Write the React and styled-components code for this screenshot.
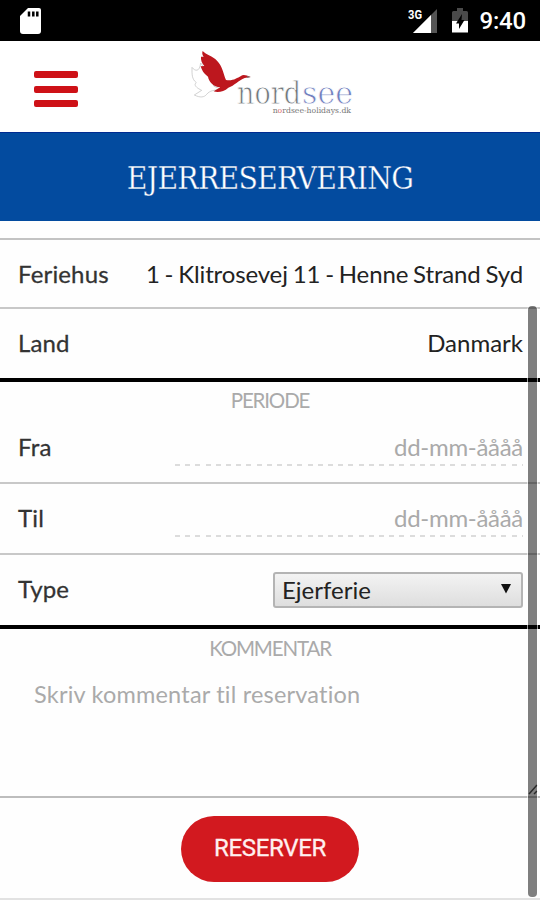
import React from 'react';
import styled, { createGlobalStyle } from 'styled-components';

const Global = createGlobalStyle`
  * { box-sizing: border-box; }
  body { margin: 0; background: #fff; font-family: Lato, sans-serif; font-variant-ligatures: none; }
`;

const Screen = styled.div`
  position: relative;
  width: 540px;
  height: 900px;
  overflow: hidden;
  background: #fefefe;
  display: flex;
  flex-direction: column;
`;

const StatusBar = styled.div`
  height: 41px;
  flex: none;
  background: #000;
  display: flex;
  align-items: center;
  justify-content: space-between;
  padding: 0 14px 0 20px;
  color: #fff;
`;

const StatusRight = styled.div`
  display: flex;
  align-items: center;
`;

const Clock = styled.span`
  font: 500 24px/41px Roboto, sans-serif;
  letter-spacing: -0.2px;
  margin: 2px 0 0 11px;
`;

const Header = styled.header`
  height: 91px;
  flex: none;
  background: #fff;
  display: flex;
`;

const MenuButton = styled.button`
  width: 44px;
  height: 37px;
  margin: 30px 102px 0 34px;
  padding: 0;
  border: 0;
  background: none;
  display: flex;
  flex-direction: column;
  gap: 7.5px;
`;

const MenuBar = styled.span`
  width: 44px;
  height: 7px;
  border-radius: 2px;
  background: #ce1117;
`;

const Title = styled.h1`
  margin: 0;
  height: 89px;
  flex: none;
  background: #034b9f;
  border-top: 1px solid #002b91;
  color: #fff;
  text-align: center;
  font: 400 31.5px/90px 'Roboto Slab', 'DejaVu Serif Condensed', 'DejaVu Serif', serif;
  font-stretch: condensed;
  letter-spacing: -0.75px;
  -webkit-text-stroke: 0.35px #034b9f;
`;

const Form = styled.form`
  margin-top: 17px;
  border-top: 2px solid #c3c3c3;
  display: flex;
  flex-direction: column;
`;

const Row = styled.div`
  height: ${(p) => p.$height}px;
  padding: 0 17px ${(p) => p.$lift || 0}px 18px;
  display: flex;
  align-items: center;
  justify-content: space-between;
  border-bottom: ${(p) => (p.$last ? '4px solid #000' : '2px solid #c8c8c8')};
`;

const Label = styled.label`
  padding-bottom: ${(p) => (p.$raised ? 2 : 0)}px;
  font-size: 24px;
  line-height: 30px;
  letter-spacing: 0.15px;
  color: #333;
  -webkit-text-stroke: 0.28px #333;
`;

const Value = styled.span`
  font-size: 24px;
  line-height: 30px;
  color: #222;
  white-space: nowrap;
  word-spacing: ${(p) => (p.$tight ? '-1.1px' : '0')};
  letter-spacing: ${(p) => (p.$tight ? '-0.14px' : '0')};
`;

const DateField = styled.span`
  width: 348px;
  height: 37px;
  text-align: right;
  font-size: 24px;
  line-height: 36px;
  letter-spacing: -0.3px;
  color: #aaa;
  background: repeating-linear-gradient(90deg, #dcdcdc 0 5px, transparent 5px 10.2px) 0 100% / 100% 2px no-repeat;
`;

const SectionTitle = styled.h2`
  margin: 0;
  height: 31px;
  padding-top: ${(p) => p.$top}px;
  text-align: center;
  font-weight: 400;
  font-size: 20.5px;
  line-height: 30px;
  letter-spacing: -1.15px;
  color: #aaa;
`;

const Select = styled.div`
  width: 250px;
  height: 36px;
  padding: 0 10px 0 7px;
  display: flex;
  align-items: center;
  justify-content: space-between;
  border: 2px solid #b4b4b4;
  border-radius: 3px;
  background: linear-gradient(#f3f3f3, #dedede);
  font-size: 24px;
  line-height: 36px;
  color: #222;
`;

const Comment = styled.div`
  height: 138px;
  padding: 19px 34px;
  border-bottom: 2px solid #bdbdbd;
  font-size: 23.5px;
  line-height: 30px;
  letter-spacing: 0.2px;
  color: #aaa;
`;

const Footer = styled.div`
  height: 102px;
  padding-top: 18px;
  display: flex;
  justify-content: center;
  align-items: flex-start;
  border-bottom: 2px solid #e2e2e2;
`;

const Submit = styled.button`
  width: 178px;
  height: 66px;
  padding: 0 0 1px;
  border: 0;
  border-radius: 33px;
  background: #d2191f;
  color: #fff0ef;
  font: 400 24px/65px Roboto, sans-serif;
  letter-spacing: -0.3px;
  -webkit-text-stroke: 0.3px #fff0ef;
`;

const ScrollThumb = styled.div`
  position: absolute;
  top: 306px;
  right: 3px;
  width: 9px;
  height: 591px;
  border-radius: 4px;
  background: rgba(0, 0, 0, 0.5);
  box-shadow: 0 0 0 1px rgba(255, 255, 255, 0.6);
`;

const ResizeGrip = styled.svg`
  position: absolute;
  right: 2px;
  top: 782px;
`;

const SdCard = () => (
  <svg width="22" height="28" viewBox="0 0 22 28">
    <path d="M8 1H19Q21 1 21 3V24Q21 27 18 27H3Q0 27 0 24V9Z" fill="#fff" />
    <path d="M9 4.5V9.5M13.3 4.5V9.5M17.3 4.5V9.5" stroke="#000" strokeWidth="2.5" />
  </svg>
);

const Signal = () => (
  <svg width="31" height="28" viewBox="0 0 31 28">
    <text x="0" y="12" fill="#fff" fontFamily="Roboto" fontWeight="700" fontSize="12.5" textLength="14" lengthAdjust="spacingAndGlyphs">3G</text>
    <path d="M29 2V26H5Z" fill="#555" />
    <path d="M23 8V26H5Z" fill="#fff" />
  </svg>
);

const BatteryIcon = styled.svg`
  margin-left: 12px;
`;

const Battery = () => (
  <BatteryIcon width="18" height="28" viewBox="0 0 18 28">
    <path d="M6 1H12V4H15.5Q17 4 17 5.5V25H1V5.5Q1 4 2.5 4H6Z" fill="#4a4a4a" />
    <path d="M1 14H17V25.5H1Z" fill="#fff" />
    <path d="M11 7L5 16.5H8V22L13.5 13H10.5Z" fill="#000" />
  </BatteryIcon>
);

const Logo = () => (
  <svg width="190" height="90" viewBox="0 0 570 270">
    <path d="M36 79C45 91 59 94 62 66C75 83 97 106 102 136L124 145C101 148 90 148 80 160C73 169 61 171 43 162L65 148C48 140 40 131 49 125C35 114 36 100 36 79Z" fill="#fff" stroke="#bbb" strokeWidth="2" />
    <path d="M68 30C78 41 98 45 111 59C128 76 130 99 138 117C158 121 171 111 183 105C190 99 199 103 212 108L194 111C176 118 163 134 145 140C132 152 114 155 101 151L121 139C100 138 87 122 84 107C70 97 65 86 62 76L73 75C65 66 62 56 63 47L71 47C66 41 66 35 68 30Z" fill="#bd171e" />
    <path d="M202 105L212 108L201 111Z" fill="#777" />
    <text x="171" y="189" fontFamily="'Roboto Slab', 'DejaVu Serif', serif" fontSize="96" fill="#71777b" stroke="#fff" strokeWidth="2.5" textLength="192" lengthAdjust="spacingAndGlyphs">nord</text>
    <text x="366" y="189" fontFamily="'Roboto Slab', 'DejaVu Serif', serif" fontSize="96" fill="#7180be" stroke="#fff" strokeWidth="2.5" textLength="153" lengthAdjust="spacingAndGlyphs">see</text>
    <text x="278" y="215" fontFamily="'DejaVu Serif', serif" fontSize="23" fill="#777" textLength="235" lengthAdjust="spacingAndGlyphs">n<tspan fill="#d66">o</tspan>rdsee-holidays.dk</text>
  </svg>
);

const Arrow = () => (
  <svg width="10" height="14" viewBox="0 0 10 14">
    <path d="M0 1H10L5 10.5Z" fill="#111" />
  </svg>
);

export default function App() {
  return (
    <>
      <Global />
      <Screen>
        <StatusBar>
          <SdCard />
          <StatusRight>
            <Signal />
            <Battery />
            <Clock>9:40</Clock>
          </StatusRight>
        </StatusBar>
        <Header>
          <MenuButton aria-label="Menu">
            <MenuBar />
            <MenuBar />
            <MenuBar />
          </MenuButton>
          <Logo />
        </Header>
        <Title>EJERRESERVERING</Title>
        <Form>
          <Row $height={69}>
            <Label>Feriehus</Label>
            <Value $tight>1 - Klitrosevej 11 - Henne Strand Syd</Value>
          </Row>
          <Row $height={73} $last $lift={2}>
            <Label>Land</Label>
            <Value>Danmark</Value>
          </Row>
          <SectionTitle $top={3}>PERIODE</SectionTitle>
          <Row $height={71}>
            <Label $raised>Fra</Label>
            <DateField>dd-mm-åååå</DateField>
          </Row>
          <Row $height={71}>
            <Label $raised>Til</Label>
            <DateField>dd-mm-åååå</DateField>
          </Row>
          <Row $height={74} $last>
            <Label $raised>Type</Label>
            <Select>
              Ejerferie
              <Arrow />
            </Select>
          </Row>
          <SectionTitle $top={4}>KOMMENTAR</SectionTitle>
          <Comment>Skriv kommentar til reservation</Comment>
          <Footer>
            <Submit type="button">RESERVER</Submit>
          </Footer>
        </Form>
        <ResizeGrip width="10" height="14" viewBox="0 0 10 14">
          <path d="M1 12L9 3M6 12L9 9" stroke="#555" strokeWidth="1.5" />
        </ResizeGrip>
        <ScrollThumb />
      </Screen>
    </>
  );
}
